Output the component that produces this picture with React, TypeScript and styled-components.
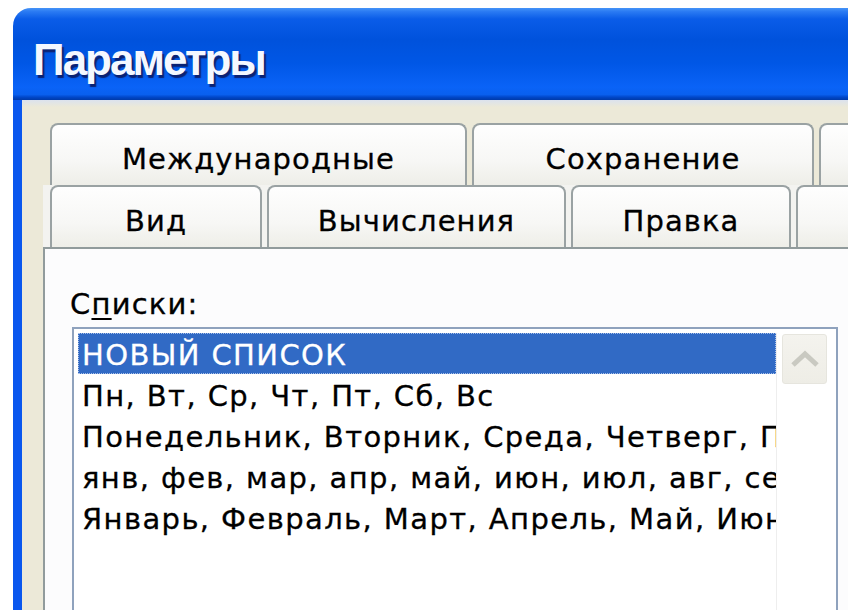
import styled, { createGlobalStyle } from "styled-components";

const GlobalStyle = createGlobalStyle`
  html, body {
    margin: 0;
    padding: 0;
    background: #ffffff;
  }
  body {
    font-family: "DejaVu Sans", "Liberation Sans", sans-serif;
  }
`;

const Screen = styled.div`
  width: 848px;
  height: 610px;
  overflow: hidden;
  box-sizing: border-box;
  padding: 8px 0 0 13px;
  background: #ffffff;
`;

const Window = styled.div`
  width: 900px;
  height: 640px;
  display: flex;
  flex-direction: column;
  border-top-left-radius: 18px;
  overflow: hidden;
`;

const TitleBar = styled.div`
  flex: 0 0 92px;
  box-sizing: border-box;
  padding: 27px 0 0 20px;
  background: linear-gradient(
    180deg,
    #4593f7 0%,
    #2a7af3 4%,
    #0a5ce8 12%,
    #0052dc 35%,
    #0057e6 60%,
    #0a63f7 86%,
    #0960ef 94%,
    #0046c8 97%,
    #003aa8 100%
  );
  color: #f4f8ff;
  font: bold 44px/50px "Liberation Sans", sans-serif;
  letter-spacing: -2px;
  text-shadow: 2px 3px 1px #0b2273;
`;

const Body = styled.div`
  flex: 1;
  display: flex;
  flex-direction: column;
  border-left: 9px solid #0a57ee;
  padding: 23px 0 0 21px;
  background: linear-gradient(180deg, #dbe2ee 0, #ece9d8 7px, #ece9d8 100%);
`;

const TabRow = styled.div<{ $front?: boolean }>`
  display: flex;
  gap: 5px;
  padding-left: 7px;
  background: ${(p) => (p.$front ? "#f3f3f0" : "transparent")};
`;

const Tab = styled.div<{ $w: number }>`
  flex: 0 0 ${(p) => p.$w}px;
  height: 62px;
  box-sizing: border-box;
  border: 2px solid #9aa2a3;
  border-bottom: none;
  border-radius: 8px 8px 0 0;
  background: linear-gradient(180deg, #fefefe 0%, #f7f7f5 60%, #eeeee8 100%);
  padding-top: 8px;
  text-align: center;
  font-size: 29px;
  line-height: 52px;
  letter-spacing: 1.1px;
  color: #000000;
  -webkit-text-stroke: 0.3px #000000;
  white-space: nowrap;
`;

const Panel = styled.div`
  flex: 1;
  display: flex;
  flex-direction: column;
  border-top: 2px solid #919b9c;
  border-left: 2px solid #919b9c;
  background: #fcfcfd;
  padding: 35px 0 0 25px;
`;

const Label = styled.div`
  font-size: 29px;
  line-height: 41px;
  letter-spacing: 1.2px;
  color: #000000;
  -webkit-text-stroke: 0.3px #000000;

  u {
    text-decoration-thickness: 2px;
    text-underline-offset: 4px;
  }
`;

const ListBox = styled.div`
  margin: 2px 0 0 2px;
  width: 766px;
  flex: 1;
  display: flex;
  box-sizing: border-box;
  border: 2px solid #8fa2bd;
  border-bottom: none;
  background: #ffffff;
  padding: 4px 0 0 4px;
`;

const Items = styled.div`
  flex: 0 0 698px;
  overflow: hidden;
`;

const Item = styled.div<{ $selected?: boolean }>`
  height: 41px;
  box-sizing: border-box;
  padding: 4px 0 0 4px;
  font-size: 29px;
  line-height: 37px;
  letter-spacing: 1.4px;
  white-space: nowrap;
  color: ${(p) => (p.$selected ? "#ffffff" : "#000000")};
  -webkit-text-stroke: 0.3px ${(p) => (p.$selected ? "#ffffff" : "#000000")};
  background: ${(p) => (p.$selected ? "#316ac5" : "transparent")};
  outline: ${(p) => (p.$selected ? "1px dotted #a9c0e8" : "none")};
  outline-offset: -1px;
`;

const ScrollBar = styled.div`
  flex: 1;
  border-left: 1px solid #eeeeee;
  padding: 1px 0 0 5px;
`;

const ArrowButton = styled.div`
  width: 45px;
  height: 50px;
  box-sizing: border-box;
  display: flex;
  align-items: center;
  justify-content: center;
  border: 1px solid #e6e5de;
  border-radius: 3px;
  background: linear-gradient(180deg, #f4f3ee 0%, #eeede6 100%);
`;

const backTabs = [
  { title: "Международные", w: 417 },
  { title: "Сохранение", w: 342 },
  { title: "", w: 200 },
];

const frontTabs = [
  { title: "Вид", w: 212 },
  { title: "Вычисления", w: 299 },
  { title: "Правка", w: 220 },
  { title: "", w: 200 },
];

const lists = [
  "НОВЫЙ СПИСОК",
  "Пн, Вт, Ср, Чт, Пт, Сб, Вс",
  "Понедельник, Вторник, Среда, Четверг, Пятница, Суббота, Воскресенье",
  "янв, фев, мар, апр, май, июн, июл, авг, сен, окт, ноя, дек",
  "Январь, Февраль, Март, Апрель, Май, Июнь, Июль, Август, Сентябрь, Октябрь, Ноябрь, Декабрь",
];

export default function App() {
  return (
    <>
      <GlobalStyle />
      <Screen>
        <Window>
          <TitleBar>Параметры</TitleBar>
          <Body>
            <TabRow>
              {backTabs.map((t, i) => (
                <Tab key={i} $w={t.w}>
                  {t.title}
                </Tab>
              ))}
            </TabRow>
            <TabRow $front>
              {frontTabs.map((t, i) => (
                <Tab key={i} $w={t.w}>
                  {t.title}
                </Tab>
              ))}
            </TabRow>
            <Panel>
              <Label>
                С<u>п</u>иски:
              </Label>
              <ListBox>
                <Items>
                  {lists.map((text, i) => (
                    <Item key={i} $selected={i === 0}>
                      {text}
                    </Item>
                  ))}
                </Items>
                <ScrollBar>
                  <ArrowButton>
                    <svg width="30" height="18" viewBox="0 0 30 18">
                      <polyline
                        points="3,15 15,4 27,15"
                        fill="none"
                        stroke="#c9c9c1"
                        strokeWidth="5"
                      />
                    </svg>
                  </ArrowButton>
                </ScrollBar>
              </ListBox>
            </Panel>
          </Body>
        </Window>
      </Screen>
    </>
  );
}
